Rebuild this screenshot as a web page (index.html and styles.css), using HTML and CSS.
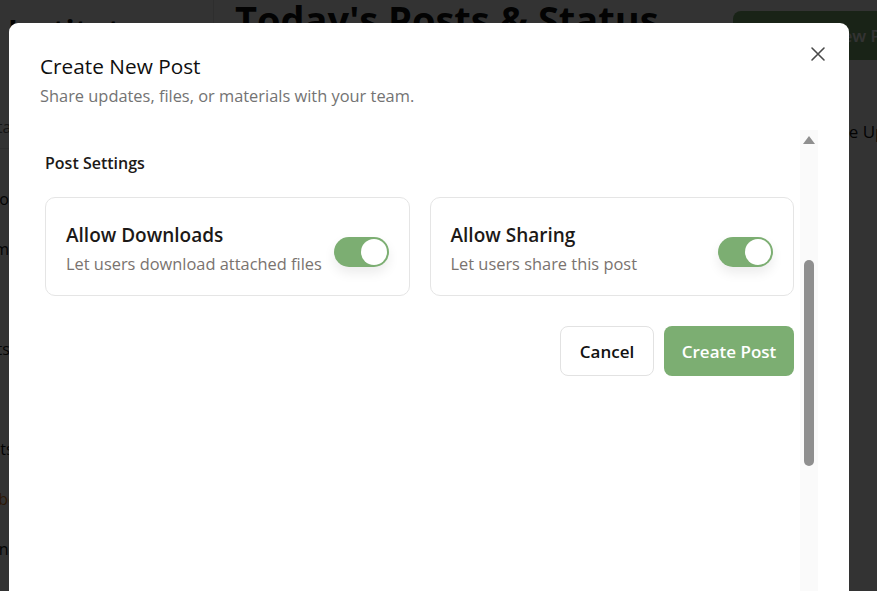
FILE: index.html
```html
<!DOCTYPE html>
<html lang="en">
<head>
<meta charset="utf-8">
<title>Create New Post</title>
<link rel="stylesheet" href="styles.css">
</head>
<body>
<div class="app">
  <aside class="sidebar">
    <div class="brand">Institute</div>
    <div class="brand-sub">Staff Space</div>
    <nav class="nav">
      <div class="nav-item">Network</div>
      <div class="nav-item">Forum</div>
      <div class="nav-item active">Mail</div>
      <div class="nav-item">Sheets</div>
      <div class="nav-item">Polls</div>
      <div class="nav-item">Results</div>
      <div class="nav-item active">Members</div>
      <div class="nav-item">Admin</div>
    </nav>
  </aside>
  <main class="main">
    <div class="topbar">
      <h1 class="page-title">Today's Posts &amp; Status</h1>
      <button class="new-btn">+ New Post</button>
    </div>
    <div class="main-sub">Live Updates</div>
  </main>
</div>

<div class="overlay">
  <div class="modal">
    <button class="close" aria-label="Close">
      <svg width="16" height="16" viewBox="0 0 16 16"><path d="M2 2 L14 14 M14 2 L2 14" stroke="#4a4a4a" stroke-width="1.6" stroke-linecap="round" fill="none"/></svg>
    </button>
    <div class="modal-header">
      <h2 class="modal-title">Create New Post</h2>
      <p class="modal-desc">Share updates, files, or materials with your team.</p>
    </div>
    <div class="modal-body">
      <div class="scroll-content">
        <h3 class="section-title">Post Settings</h3>
        <div class="settings">
          <div class="setting-card">
            <div class="setting-text">
              <div class="setting-name">Allow Downloads</div>
              <div class="setting-desc">Let users download attached files</div>
            </div>
            <span class="toggle on"><span class="knob"></span></span>
          </div>
          <div class="setting-card">
            <div class="setting-text">
              <div class="setting-name">Allow Sharing</div>
              <div class="setting-desc">Let users share this post</div>
            </div>
            <span class="toggle on"><span class="knob"></span></span>
          </div>
        </div>
        <div class="actions">
          <button class="btn btn-cancel">Cancel</button>
          <button class="btn btn-primary">Create Post</button>
        </div>
      </div>
      <div class="scrollbar">
        <span class="sb-arrow"></span>
        <span class="sb-thumb"></span>
      </div>
    </div>
  </div>
</div>
</body>
</html>
```
FILE: styles.css
```css
* { box-sizing: border-box; }
html, body { margin: 0; padding: 0; height: 100%; overflow: hidden; }
body {
  font-family: "Open Sans", "Noto Sans", "Liberation Sans", sans-serif;
  background: #ffffff;
  color: #1c1917;
}
button { font-family: inherit; }

/* underlying page */
.app { display: flex; height: 100vh; overflow: hidden; }
.sidebar {
  width: 214px;
  flex: none;
  border-right: 1px solid #e5e5e5;
  padding-top: 11px;
  overflow: hidden;
}
.brand {
  font-size: 30px;
  font-weight: 700;
  padding-left: 8px;
  color: #111;
  line-height: 40px;
}
.brand-sub {
  margin-top: 65px;
  color: #666;
  font-size: 16px;
  margin-left: -12px;
  padding-bottom: 10px;
  border-bottom: 1px solid #e5e5e5;
}
.nav { margin-top: 40px; margin-left: -40px; }
.nav-item { height: 50px; font-size: 16px; line-height: 20px; color: #111; }
.nav-item.active { color: #e07a1f; }

.main { flex: 1; min-width: 0; padding: 0 0 0 21px; overflow: hidden; }
.topbar { display: flex; justify-content: space-between; align-items: flex-start; }
.page-title {
  margin: -6px 0 0 0;
  font-size: 38px;
  font-weight: 700;
  color: #111;
  line-height: 50px;
  white-space: nowrap;
}
.new-btn {
  margin-top: 11px;
  margin-right: -40px;
  width: 184px;
  flex: none;
  height: 49px;
  border: 0;
  border-radius: 8px;
  background: #7cae72;
  color: #fff;
  font-size: 17px;
  font-weight: 600;
  text-align: left;
  padding-left: 82px;
  white-space: nowrap;
}
.main-sub { text-align: right; margin-top: 60px; font-size: 17px; margin-right: -52px; color: #111; white-space: nowrap; }

/* overlay */
.overlay {
  position: fixed;
  inset: 0;
  background: rgba(0, 0, 0, 0.8);
  padding: 23px 0 0 9px;
  overflow: hidden;
}
.modal {
  position: relative;
  width: 840px;
  height: 620px;
  background: #fff;
  border-radius: 9px;
  padding: 30px 31px 0 31px;
  display: flex;
  flex-direction: column;
}
.close {
  position: absolute;
  top: 19px;
  right: 19px;
  width: 24px;
  height: 24px;
  border: 0;
  background: none;
  padding: 4px;
  display: flex;
}
.modal-title {
  margin: 0;
  font-size: 20.8px;
  font-weight: 500;
  line-height: 26px;
  color: #0f0f0f;
}
.modal-desc {
  margin: 6px 0 0 0;
  font-size: 16.4px;
  line-height: 22px;
  color: #737373;
}
.modal-body {
  margin-top: 23px;
  flex: 1;
  display: flex;
  min-height: 0;
}
.scroll-content { flex: 1; padding: 21px 6px 0 5px; }
.section-title {
  margin: 0;
  font-size: 16px;
  font-weight: 600;
  line-height: 24px;
  color: #1c1917;
}
.settings {
  margin-top: 22px;
  display: grid;
  grid-template-columns: 1fr 1fr;
  gap: 20px;
}
.setting-card {
  height: 99px;
  border: 1px solid #e5e5e5;
  border-radius: 10px;
  padding: 3px 20px 0 20px;
  display: flex;
  align-items: center;
  justify-content: space-between;
}
.setting-name { font-size: 19px; font-weight: 600; line-height: 26px; color: #1c1917; }
.setting-desc { margin-top: 5px; font-size: 16.4px; line-height: 22px; color: #7a736f; }
.toggle {
  width: 55px;
  height: 30px;
  margin-top: 8px;
  border-radius: 15px;
  background: #7cae72;
  display: flex;
  align-items: center;
  justify-content: flex-end;
  padding: 2px;
  box-shadow: 0 6px 12px rgba(0, 0, 0, 0.08);
  flex: none;
}
.knob { width: 26px; height: 26px; border-radius: 50%; background: #fff; }

.actions {
  margin-top: 30px;
  display: flex;
  justify-content: flex-end;
  gap: 10px;
}
.btn {
  height: 50px;
  border-radius: 8px;
  font-size: 17px;
  font-weight: 600;
  cursor: pointer;
}
.btn-cancel { width: 94px; background: #fff; border: 1px solid #e2e2e2; color: #111; }
.btn-primary { width: 130px; background: #7cae72; border: 0; color: #fff; }

.scrollbar {
  width: 18px;
  flex: none;
  background: #fafafa;
  display: flex;
  flex-direction: column;
  align-items: center;
}
.sb-arrow {
  margin-top: 6px;
  width: 0;
  height: 0;
  border-left: 6px solid transparent;
  border-right: 6px solid transparent;
  border-bottom: 8px solid #8f8f8f;
}
.sb-thumb {
  margin-top: 116px;
  width: 10px;
  height: 206px;
  border-radius: 5px;
  background: #8f8f8f;
}
```
